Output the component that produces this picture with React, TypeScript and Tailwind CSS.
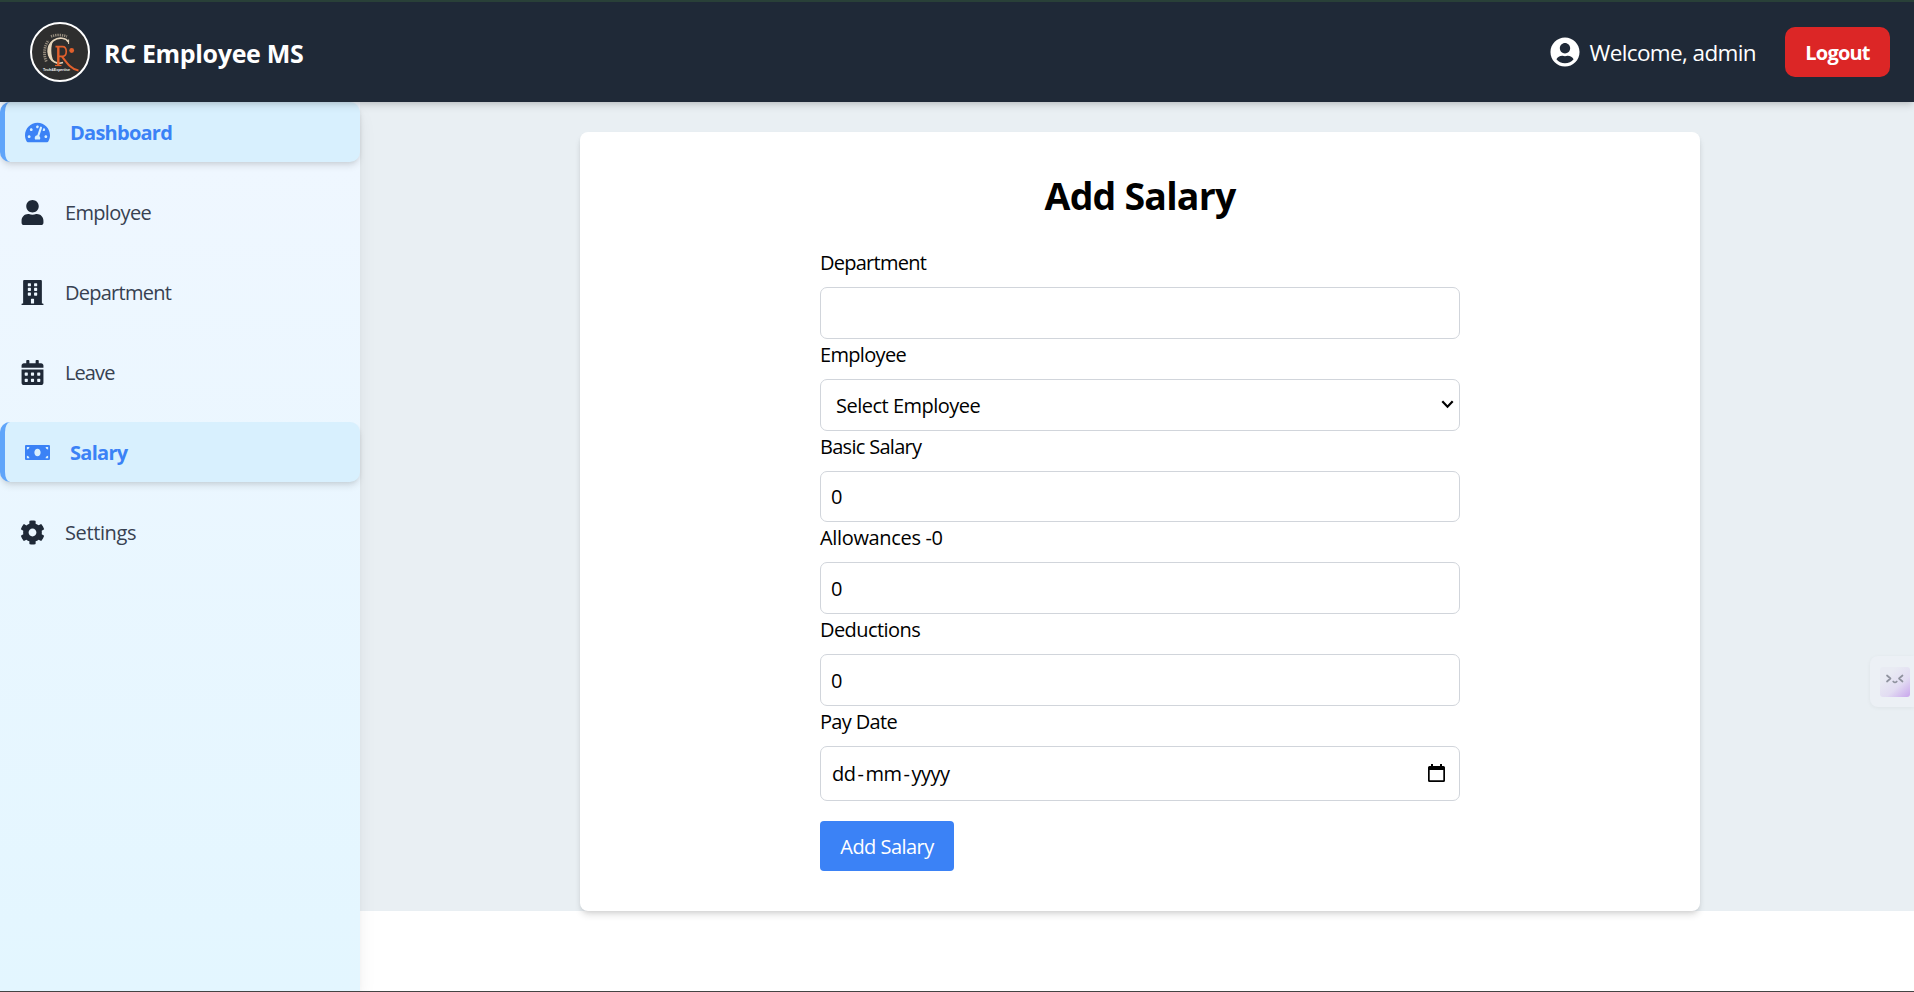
import React from 'react';
import {
  FaTachometerAlt,
  FaUser,
  FaBuilding,
  FaCalendarAlt,
  FaMoneyBill,
  FaCog,
  FaUserCircle,
} from 'react-icons/fa';

function Logo() {
  return (
    <svg viewBox="0 0 60 60" className="size-[60px] shrink-0">
      <circle cx="30" cy="30" r="29" fill="#2e2e2e" stroke="#fff" strokeWidth="2" />
      <path
        d="M38.5 20 C36 16 29 14.500 23.500 18.500 C16 24 16.500 35.500 24.500 40 C27 41.400 30 41.600 33 40.600"
        fill="none"
        stroke="#e6d6bd"
        strokeWidth="1.600"
      />
      <path d="M23.500 18 C15.500 23.500 16 35 24 39.800 C20.500 33.500 20.500 24 23.500 18 Z" fill="#e6d6bd" />
      <path d="M38.600 17.500 V22" stroke="#e6d6bd" strokeWidth="1" />
      <path d="M16.300 39.500 C13 32 14.500 23.500 18.500 18.500" fill="none" stroke="#b9ac98" strokeWidth="2.800" strokeDasharray="1.300 0.900" opacity="0.75" />
      <path d="M21 14.500 C25.500 12.500 32 12.500 37 14.500" fill="none" stroke="#b9ac98" strokeWidth="2.600" strokeDasharray="1.300 0.900" opacity="0.75" />
      <g fill="none" stroke="#e2602c">
        <path d="M25.500 24.600 H32.500 C37.500 24.600 37.500 34.400 32.500 34.400 H28" strokeWidth="1.600" />
        <path d="M28.300 24.500 V43" strokeWidth="2.400" />
        <path d="M25 43.500 H31.500" strokeWidth="1.200" />
        <path d="M32 34.500 C36.500 40.500 41 47.500 48.500 48.600" strokeWidth="2" />
      </g>
      <circle cx="41.700" cy="28.500" r="2.400" fill="#e2602c" />
      <text
        x="13"
        y="49"
        textLength="27"
        lengthAdjust="spacingAndGlyphs"
        fill="#f3f3f3"
        fontSize="3.600"
        fontWeight="700"
        fontFamily="Liberation Sans, sans-serif"
      >
        Tech&amp;Expertise
      </text>
    </svg>
  );
}

const links = [
  { label: 'Dashboard', Icon: FaTachometerAlt, active: true, tracking: 'tracking-[-0.75px]' },
  { label: 'Employee', Icon: FaUser, active: false, tracking: 'tracking-[-0.67px]' },
  { label: 'Department', Icon: FaBuilding, active: false, tracking: 'tracking-[-0.75px]' },
  { label: 'Leave', Icon: FaCalendarAlt, active: false, tracking: 'tracking-[-0.9px]' },
  { label: 'Salary', Icon: FaMoneyBill, active: true, tracking: 'tracking-[-0.7px]' },
  { label: 'Settings', Icon: FaCog, active: false, tracking: 'tracking-[-0.38px]' },
];

function Header() {
  return (
    <header className="relative z-20 flex h-[102px] shrink-0 items-center justify-between border-t-2 border-[#294038] bg-[#1f2937] pr-6 pl-[30px] text-white shadow-[0_5px_7px_-1px_rgba(0,0,0,0.12),0_2px_5px_-2px_rgba(0,0,0,0.12)]">
      <div className="flex items-center gap-[14px]">
        <Logo />
        <h1 className="pt-[2px] text-[25px] leading-[35px] font-bold tracking-[-0.33px]">RC Employee MS</h1>
      </div>
      <div className="flex items-center gap-[29px]">
        <div className="flex items-center gap-[10px]">
          <FaUserCircle className="size-[30px]" />
          <span className="pt-px text-[22.5px] leading-[35px] tracking-[-0.62px]">Welcome, admin</span>
        </div>
        <button className="h-[50px] w-[105px] rounded-[10px] bg-[#dc2626] pt-[2px] text-xl font-bold tracking-[-0.8px]">
          Logout
        </button>
      </div>
    </header>
  );
}

function Sidebar() {
  return (
    <aside className="relative z-10 flex w-[360px] shrink-0 flex-col gap-5 bg-linear-to-b from-[#f0f7ff] to-[#e3f6ff] shadow-[0_12px_19px_-4px_rgba(0,0,0,0.1),0_5px_8px_-5px_rgba(0,0,0,0.1)]">
      {links.map(({ label, Icon, active, tracking }) => (
        <a
          key={label}
          className={
            active
              ? 'flex h-[60px] items-center gap-5 rounded-[10px] border-l-[5px] border-[#60a5fa] bg-[#d8f0fe] pl-5 font-bold text-[#3b82f6] shadow-[0_5px_7px_-1px_rgba(0,0,0,0.1),0_2px_5px_-2px_rgba(0,0,0,0.1)]'
              : 'flex h-[60px] items-center gap-5 pl-5 text-[#374151]'
          }
        >
          <Icon className={active ? 'size-[25px]' : 'size-[25px] text-[#1f2937]'} />
          <span className={`pt-[2px] text-xl leading-[30px] ${tracking}`}>{label}</span>
        </a>
      ))}
    </aside>
  );
}

function Field({ label, tracking, children }: { label: string; tracking: string; children?: React.ReactNode }) {
  return (
    <div className="flex flex-col">
      <label className={`mb-2 h-8 pt-px text-xl leading-[30px] ${tracking}`}>{label}</label>
      {children}
    </div>
  );
}

const box = 'flex h-[51.8px] items-center rounded-[7px] border border-[#d1d5db] pt-[2px] text-xl';

function SalaryForm() {
  return (
    <section className="mt-[30px] h-[779px] w-[1120px] rounded-[8px] bg-white px-[240px] pt-[41px] text-black shadow-[0_5px_7px_-1px_rgba(0,0,0,0.12),0_2px_5px_-2px_rgba(0,0,0,0.12)]">
      <h2 className="text-center text-[37.5px] leading-[45px] font-bold tracking-[-0.8px]">Add Salary</h2>
      <form className="mt-[29px] flex flex-col">
        <Field label="Department" tracking="tracking-[-0.75px]">
          <div className={box} />
        </Field>
        <Field label="Employee" tracking="tracking-[-0.67px]">
          <div className={`${box} justify-between pr-[5px] pl-[15px] tracking-[-0.5px]`}>
            Select Employee
            <svg viewBox="0 0 13 9" className="mb-[2px] h-[9px] w-[13px]" fill="none" stroke="#000" strokeWidth="2.2">
              <path d="M1.300 1.300 L6.500 6.700 L11.700 1.300" />
            </svg>
          </div>
        </Field>
        <Field label="Basic Salary" tracking="tracking-[-0.71px]">
          <div className={`${box} pl-[10px]`}>0</div>
        </Field>
        <Field label="Allowances -0" tracking="tracking-[-0.34px]">
          <div className={`${box} pl-[10px]`}>0</div>
        </Field>
        <Field label="Deductions" tracking="tracking-[-0.56px]">
          <div className={`${box} pl-[10px]`}>0</div>
        </Field>
        <Field label="Pay Date" tracking="tracking-[-0.66px]">
          <div className="flex h-[55px] items-center justify-between rounded-[7px] border border-[#d1d5db] pr-[14px] pl-[11px] text-xl tracking-[-0.5px]">
            <span className="pt-[2px]">
              dd<span className="px-[2px]">-</span>mm<span className="px-[2px]">-</span>yyyy
            </span>
            <svg viewBox="0 0 17 18" className="mb-px h-[18px] w-[17px]">
              <path d="M3 0h2v2h7V0h2v2h1.500Q17 2 17 3.500V16.500Q17 18 15.500 18H1.500Q0 18 0 16.500V3.500Q0 2 1.500 2H3ZM1.700 6V16.300H15.300V6Z" fillRule="evenodd" />
            </svg>
          </div>
        </Field>
        <button
          type="button"
          className="mt-5 h-[50px] w-[134px] rounded-[4px] bg-[#3b82f6] pt-[2px] text-xl tracking-[-0.53px] text-white"
        >
          Add Salary
        </button>
      </form>
    </section>
  );
}

function AssistantTab() {
  return (
    <div className="absolute top-[656px] right-0 z-30 flex h-[51px] w-[44px] items-center rounded-l-[8px] bg-[#ecf0f5] pl-[10px] shadow-[0_1px_4px_rgba(0,0,0,0.05)]">
      <svg viewBox="0 0 30 30" className="size-[30px]">
        <defs>
          <linearGradient id="glow" x1="0.300" y1="0.200" x2="1" y2="1">
            <stop offset="0" stopColor="#e9ebf3" />
            <stop offset="0.500" stopColor="#e2dcf2" />
            <stop offset="1" stopColor="#c8a5ec" />
          </linearGradient>
        </defs>
        <rect width="30" height="30" rx="3" fill="url(#glow)" />
        <g fill="none" stroke="#8f929e" strokeWidth="1.700" strokeLinecap="round" strokeLinejoin="round">
          <path d="M7 8.500 L10.500 11.500 L7 14.500" />
          <path d="M22.500 8.500 L19 11.500 L22.500 14.500" />
          <path d="M13.200 14.500 Q15 16.300 16.800 14.500" />
        </g>
      </svg>
    </div>
  );
}

export default function App() {
  return (
    <div
      className="relative flex h-[992px] w-full flex-col overflow-hidden border-b border-[#444] bg-white"
      style={{ fontFamily: '"Open Sans", "Noto Sans", sans-serif' }}
    >
      <Header />
      <div className="flex min-h-0 flex-1">
        <Sidebar />
        <main className="flex h-[809px] flex-1 justify-center bg-[#e9eff3] pl-[6px]">
          <SalaryForm />
        </main>
      </div>
      <AssistantTab />
    </div>
  );
}
